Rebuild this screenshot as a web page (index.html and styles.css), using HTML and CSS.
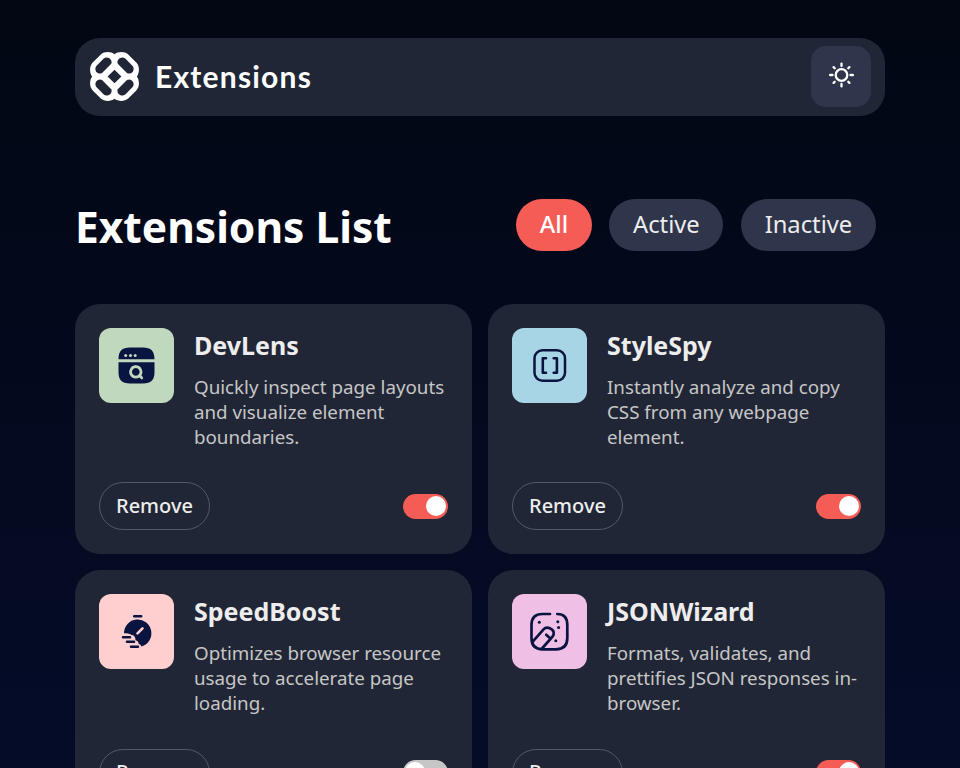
FILE: index.html
```html
<!DOCTYPE html>
<html lang="en">
<head>
<meta charset="utf-8">
<title>Extensions</title>
<link rel="stylesheet" href="styles.css">
</head>
<body>
<header class="topbar">
  <div class="brand">
    <svg class="brand-mark" viewBox="-25 -25 50 50">
      <path fill="#fff" d="M0-22.800C-3.500-25.400-10-26-14-22.500L-22.500-14C-26-10-25.400-3.500-22.800 0C-25.400 3.500-26 10-22.500 14L-14 22.500C-10 26-3.500 25.400 0 22.800C3.500 25.400 10 26 14 22.500L22.500 14C26 10 25.400 3.500 22.800 0C25.400-3.500 26-10 22.500-14L14-22.500C10-26 3.500-25.400 0-22.800z"/>
      <g fill="#212636">
        <path id="loop" d="M-18.500-10.800L-11-18.300C-7.500-21.400-1.500-17.500-3.300-13L-12.700-3.500C-17-1.200-21.600-6.500-18.500-10.800z"/>
        <use href="#loop" transform="scale(-1 1)"/>
        <use href="#loop" transform="scale(1 -1)"/>
        <use href="#loop" transform="scale(-1 -1)"/>
        <path d="M0-7l7 7-7 7-7-7z"/>
      </g>
    </svg>
    <span class="brand-name">Extensions</span>
  </div>
  <button class="theme" aria-label="Toggle theme">
    <svg width="26" height="26" viewBox="-13.500 -13 26 26" fill="none" stroke="#fff" stroke-width="2.300" stroke-linecap="round">
      <circle r="5.800"/>
      <path d="M0-11.400v2.400M0 11.400V9M-11.400 0H-9M11.400 0H9M-7.900-7.900l1.100 1.100M7.900-7.900 6.800-6.800M-7.900 7.900l1.100-1.100M7.900 7.900 6.800 6.800"/>
    </svg>
  </button>
</header>
<main>
  <div class="heading">
    <h1>Extensions List</h1>
    <div class="filters">
      <button class="filter selected">All</button>
      <button class="filter">Active</button>
      <button class="filter">Inactive</button>
    </div>
  </div>
  <section class="grid">
    <article class="card">
      <div class="info">
        <svg class="icon green" viewBox="0 0 75 75">
          <path fill="#091540" d="M19.500 31.300C19.500 23 23 19.500 31 19.500h13c8 0 11.500 3.500 11.500 11.800zM19.500 34.200h36V44c0 8-3.500 11.500-11.500 11.500H31c-8 0-11.500-3.500-11.500-11.500z"/>
          <g fill="#c0d8bd"><circle cx="26.700" cy="27.500" r="1.500"/><circle cx="31.500" cy="27.500" r="1.500"/><circle cx="36.200" cy="27.500" r="1.500"/></g>
          <path fill="none" stroke="#c0d8bd" stroke-width="2.700" stroke-linecap="round" d="M41 47.500l1.800 2.500M36.800 38.700a5.200 5.200 0 1 0 .01 0"/>
        </svg>
        <div class="copy"><h2>DevLens</h2><p>Quickly inspect page layouts and visualize element boundaries.</p></div>
      </div>
      <div class="actions"><button class="remove">Remove</button><span class="switch on"></span></div>
    </article>
    <article class="card">
      <div class="info">
        <svg class="icon blue" viewBox="0 0 75 75" fill="none" stroke="#091540" stroke-linecap="round" stroke-linejoin="round">
          <rect x="22.500" y="22.300" width="30.500" height="30.500" rx="8" stroke-width="2.500"/>
          <path stroke-width="2.600" d="M34 30.300h-3.200v14.500H34M41.700 30.300h3.200v14.500h-3.200"/>
        </svg>
        <div class="copy"><h2>StyleSpy</h2><p>Instantly analyze and copy CSS from any webpage element.</p></div>
      </div>
      <div class="actions"><button class="remove">Remove</button><span class="switch on"></span></div>
    </article>
    <article class="card">
      <div class="info">
        <svg class="icon pink" viewBox="0 0 75 75">
          <path fill="#091540" d="M25 39.300a13.700 13.700 0 1 1 17.500 13.100c-.6-1.400-1.500-2.300-2.800-2.500.1-1.800-1.200-3.200-3.200-3.700.1-3.100-1.400-5.100-4-5.100-1.200-1.200-3.500-1.800-7.500-1.800z"/>
          <path fill="none" stroke="#091540" stroke-width="2.500" stroke-linecap="round" d="M35.200 22.200h7M24 43.300h7M28 47.800h7M32 52.700h7"/>
          <path stroke="#ffcfcf" stroke-width="2.600" stroke-linecap="round" d="M38.500 39.300l5-5"/>
        </svg>
        <div class="copy"><h2>SpeedBoost</h2><p>Optimizes browser resource usage to accelerate page loading.</p></div>
      </div>
      <div class="actions"><button class="remove">Remove</button><span class="switch"></span></div>
    </article>
    <article class="card">
      <div class="info">
        <svg class="icon violet" viewBox="0 0 75 75">
          <g fill="none" stroke="#091540" stroke-width="2.700" stroke-linecap="round" stroke-linejoin="round">
            <path d="M38 20h-7.500C23 20 19.500 24 19.500 31v13c0 7.500 3.500 11.300 11 11.300h13.500c7.500 0 11.300-3.800 11.300-11.300V31c0-7.500-3.500-11-10-11"/>
            <path d="M20.500 47.800l11.300-12.600c3-3.400 11-.2 9.800 5.300-.2 1.200-.8 1.800-1.500 2.600L30 54.500M34.200 40.800l3.300 3"/>
          </g>
          <g fill="#091540"><circle cx="27.300" cy="28.300" r="1.500"/><circle cx="45.800" cy="27.800" r="1.500"/><circle cx="46.600" cy="33.600" r="1.500"/><circle cx="43.800" cy="46.700" r="1.500"/></g>
        </svg>
        <div class="copy"><h2>JSONWizard</h2><p>Formats, validates, and prettifies JSON responses in-browser.</p></div>
      </div>
      <div class="actions"><button class="remove">Remove</button><span class="switch on"></span></div>
    </article>
  </section>
</main>
</body>
</html>
```
FILE: styles.css
```css
* { box-sizing: border-box; }
html { height: 100%; overflow: hidden; }
body {
  margin: 0;
  height: 100%;
  overflow: hidden;
  padding: 38px 75px 0;
  background: linear-gradient(#020713, #050c28);
  font-family: "Noto Sans", sans-serif;
  color: #ededed;
}
button { font-family: inherit; color: inherit; border: 0; margin: 0; }
.topbar {
  height: 78px;
  padding: 0 14px 0 15px;
  border-radius: 25px;
  background: #212636;
  display: flex;
  align-items: center;
  justify-content: space-between;
}
.brand { display: flex; align-items: center; gap: 16px; }
.brand-mark { width: 49px; height: 49px; margin-bottom: 1px; }
.brand-name { margin-bottom: 2px; font: 700 30px/40px Lato, sans-serif; color: #fff; letter-spacing: 1.200px; }
.theme {
  width: 60px;
  height: 61px;
  margin-bottom: 2px;
  padding: 0 0 2px;
  border-radius: 15px;
  background: #2f354b;
  display: flex;
  align-items: center;
  justify-content: center;
}
.heading {
  height: 52px;
  margin: 83px 9px 53px 0;
  display: flex;
  align-items: center;
  justify-content: space-between;
}
h1 { margin: 3px 0 0; font-size: 42.500px; line-height: 60px; font-weight: 700; color: #fff; }
.filters { display: flex; gap: 17.400px; }
.filter {
  height: 52px;
  padding: 0 23.750px 2px;
  border-radius: 26px;
  background: #2f354b;
  font-size: 23.750px;
  line-height: 50px;
}
.selected { background: #f45c55; color: #fff; font-weight: 500; }
.grid { display: grid; grid-template-columns: 1fr 1fr; gap: 16px; }
.card {
  height: 250.250px;
  padding: 24px;
  border-radius: 25px;
  background: #212636;
  display: flex;
  flex-direction: column;
  justify-content: space-between;
}
.info { display: flex; gap: 20px; }
.icon { flex: none; width: 75px; height: 75px; border-radius: 12px; }
.green { background: #c0d8bd; }
.blue { background: #a8d5e5; }
.pink { background: #ffcfcf; }
.violet { background: #efbfe5; }
h2 { margin: 0; font-size: 25px; line-height: 34px; font-weight: 700; }
p { margin: 12px 0 0; font-size: 18.750px; line-height: 25px; color: #c6c6c6; }
.actions { display: flex; align-items: center; justify-content: space-between; }
.remove {
  height: 48px;
  padding: 0 16px 2px;
  border: 1px solid #535868;
  border-radius: 24px;
  background: none;
  font-size: 20px;
  font-weight: 500;
}
.switch {
  width: 45px;
  height: 25px;
  padding: 2px;
  border-radius: 13px;
  background: #c6c6c6;
  display: flex;
}
.switch::before { content: ""; width: 20px; height: 20px; border-radius: 50%; background: #fff; }
.on { background: #f45c55; justify-content: flex-end; }
```
